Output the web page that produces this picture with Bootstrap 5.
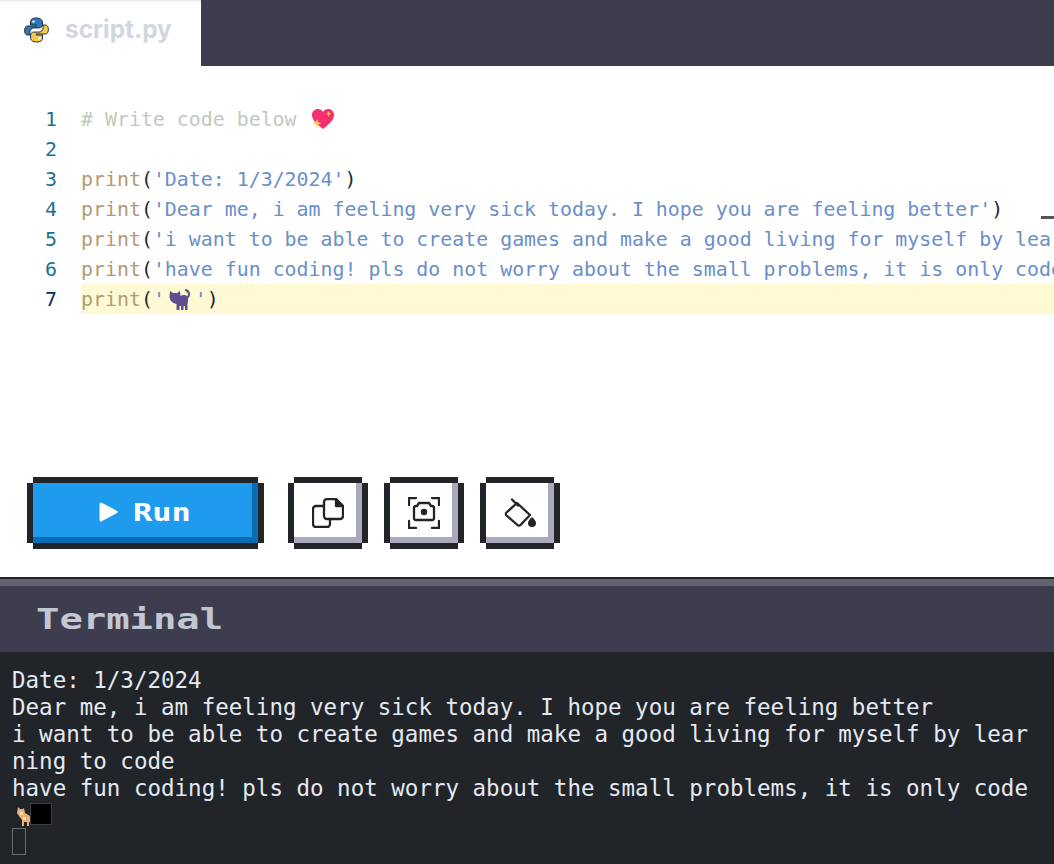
<!DOCTYPE html>
<html lang="en"><head><meta charset="utf-8"><title>script.py</title>
<link rel="stylesheet" href="https://cdn.jsdelivr.net/npm/bootstrap@5.3.0/dist/css/bootstrap.min.css">
<style>
html,body{height:864px;overflow:hidden;background:#fff}
.tabbar{height:66px;background:#3e3d50}
.filetab{width:201px;height:66px;background:#fff;padding:0 0 6px 24px;gap:16px;box-shadow:inset 0 3px 3px -2px #e4e4e6;color:#d2d6df;font:700 24.400px/1.2 Inter,"Liberation Sans",sans-serif}
.editor{height:511px;position:relative;overflow:hidden}
.code{padding-top:38px;font:19.9px/32px "DejaVu Sans Mono",monospace}
.cline{height:30px;white-space:pre}
.num{width:57px;text-align:right;color:#1a7290;flex:none;margin-right:24px}
.num-on{color:#0c2a66}
.txt{flex:1;min-width:0;color:#24292e}
.txt-on{background:#fffad3}
.fn{color:#b39a74}.str{color:#6a8fc9}.cmt{color:#c1c9bd}
.emo{display:inline-block;vertical-align:-4px}
.emo-heart{margin-left:2px}
.emo-cat{margin:0 4px 0 4px;vertical-align:-5px}
.tick{position:absolute;right:0;top:150px;width:13px;height:3px;background:#555}
.btnrow{position:absolute;left:33px;top:417px;gap:28px}
.pix{height:60px;width:68px;border:0;border-radius:0;padding:0;background:#fff;display:flex;align-items:center;justify-content:center;box-shadow:inset -6px -6px 0 #a8a9bb,0 -6px 0 #212529,0 6px 0 #212529,-6px 0 0 #212529,6px 0 0 #212529}
.pix-run{width:225px;margin-right:8px;background:#1f9bee;gap:14px;justify-content:flex-start;padding:0 0 2px 66px;color:#fff;box-shadow:inset -6px -6px 0 #0b6cb4,0 -6px 0 #212529,0 6px 0 #212529,-6px 0 0 #212529,6px 0 0 #212529;font:700 25px/1 "DejaVu Sans Mono",monospace}
.runlabel{display:inline-block;transform:scaleX(1.28);transform-origin:left center}
.termhead{height:75px;background:#3e3d50;border-top:2px solid #212529;padding:7px 0 0 36px;color:#c3c7d2;font:700 29px/66px "DejaVu Sans Mono",monospace;box-shadow:inset 0 7px 0 #63636f}
.termlabel{display:inline-block;transform:scaleX(1.34);transform-origin:left center}
.termbody{height:212px;background:#212529;color:#e4e9f3;padding:15px 16px 0 12px;font:22.5px/27px "DejaVu Sans Mono",monospace}
.tline{min-height:27px;white-space:pre-wrap;word-break:break-all}
.tcat{margin-left:5px;margin-right:-1px;vertical-align:-3px}
.blk{display:inline-block;width:22px;height:22px;background:#000;border:1px solid #3a3d42;vertical-align:-2px}
.cur{width:14px;height:27px;border:1px solid #6a6d72;margin-top:-1px}
</style></head><body>
<div class="tabbar d-flex"><div class="filetab d-flex align-items-center">
<svg width="25" height="26" viewBox="0 0 25 26"><path fill="#2f78b7" stroke="#1d2a38" stroke-width="1" d="M12.400 1C8 1 6.500 2.600 6.500 5v3h6.200v1H3.800C1.600 9 .6 11 .6 13.400c0 2.500 1 4.600 3 4.600h2.300v-3c0-2.300 1.900-4.100 4.100-4.100h5.400c1.700 0 3-1.400 3-3.100V5c0-2.300-2.400-4-6-4z"/><path fill="#f6cb4a" stroke="#1d2a38" stroke-width="1" d="M12.600 25c4.400 0 5.900-1.600 5.900-4v-3h-6.200v-1h8.900c2.200 0 3.200-2 3.200-4.400 0-2.500-1-4.600-3-4.600h-2.300v3c0 2.300-1.900 4.100-4.100 4.100H9.600c-1.700 0-3 1.400-3 3.100V21c0 2.300 2.400 4 6 4z"/><circle cx="9.500" cy="4.600" r="1.200" fill="#fff"/><circle cx="15.500" cy="21.400" r="1.200" fill="#fff"/></svg>
<span>script.py</span></div></div>
<div class="editor">
<div class="code">
<div class="cline d-flex"><div class="num">1</div><div class="txt"><span class="cmt"># Write code below </span><svg class="emo emo-heart" width="24" height="22" viewBox="0 0 24 22"><path fill="#f4306f" d="M12 21C4 15 1 11 1 7c0-3.500 2.700-6 5.800-6C9 1 11 2.200 12 4c1-1.800 3-3 5.200-3C20.300 1 23 3.500 23 7c0 4-3 8-11 14z"/><path fill="#fbd24c" d="M6 11l1.300 3 3 1.200-3 1.300L6 20l-1.300-3.500-3-1.300 3-1.200zM17.500 3l.8 2 2 .8-2 .8-.8 2-.8-2-2-.8 2-.8z"/></svg></div></div>
<div class="cline d-flex"><div class="num">2</div><div class="txt"></div></div>
<div class="cline d-flex"><div class="num">3</div><div class="txt"><span class="fn">print</span>(<span class="str">'Date: 1/3/2024'</span>)</div></div>
<div class="cline d-flex"><div class="num">4</div><div class="txt"><span class="fn">print</span>(<span class="str">'Dear me, i am feeling very sick today. I hope you are feeling better'</span>)</div></div>
<div class="cline d-flex"><div class="num">5</div><div class="txt overflow-hidden"><span class="fn">print</span>(<span class="str">'i want to be able to create games and make a good living for myself by learning to code'</span>)</div></div>
<div class="cline d-flex"><div class="num">6</div><div class="txt overflow-hidden"><span class="fn">print</span>(<span class="str">'have fun coding! pls do not worry about the small problems, it is only code'</span>)</div></div>
<div class="cline d-flex"><div class="num num-on">7</div><div class="txt txt-on"><span class="fn">print</span>(<span class="str">'<svg class="emo emo-cat" width="22" height="22" viewBox="0 0 22 22"><path fill="none" stroke="#5f4f8f" stroke-width="2" stroke-linecap="round" d="M16 9c3 0 4-2 4-4s-1-3-3-4"/><path fill="#5f4f8f" d="M1 2l3 2h4l3-2 .5 5c2-1.500 6-1.500 7 1 1 2 .5 5 0 7v6h-2.500v-4h-1.500v4h-2.500v-4h-1.500v4H7.500v-6C3 14 .5 11 .5 8z"/></svg>'</span>)</div></div>
</div>
<div class="tick"></div>
<div class="btnrow d-flex">
<button class="btn pix pix-run" type="button"><svg width="20" height="22" viewBox="0 0 20 22"><path fill="#fff" stroke="#fff" stroke-width="3" stroke-linejoin="round" d="M2 3l15 8-15 8z"/></svg><span class="runlabel">Run</span></button>
<button class="btn pix" type="button" aria-label="Copy"><svg width="32" height="30" viewBox="0 0 32 30" fill="none" stroke="#212529" stroke-width="2.300" stroke-linejoin="round" stroke-linecap="round"><path d="M15 1h9l7 7v10a3 3 0 0 1-3 3H15a3 3 0 0 1-3-3V4a3 3 0 0 1 3-3z"/><path fill="#212529" d="M24 1v7h7z"/><path d="M12 8H4a3 3 0 0 0-3 3v15a3 3 0 0 0 3 3h11a3 3 0 0 0 3-3v-5"/></svg></button>
<button class="btn pix" type="button" aria-label="Screenshot"><svg width="32" height="32" viewBox="0 0 32 32" fill="none" stroke="#212529" stroke-width="2.300" stroke-linecap="round" stroke-linejoin="round"><path d="M1 8V1h7M24 1h7v7M31 24v7h-7M8 31H1v-7"/><path d="M9 9l2-3h10l2 3h1a2 2 0 0 1 2 2v10a2 2 0 0 1-2 2H8a2 2 0 0 1-2-2V11a2 2 0 0 1 2-2z"/><circle cx="16" cy="15" r="3.200" fill="#212529" stroke="none"/></svg></button>
<button class="btn pix" type="button" aria-label="Fill"><svg width="32" height="30" viewBox="0 0 32 30" fill="none" stroke="#212529" stroke-width="2.300" stroke-linejoin="round" stroke-linecap="round"><path d="M8 1.500l6 6"/><path d="M13 5l13 12-9.500 10a2 2 0 0 1-3 0L2.500 17.500a2 2 0 0 1 0-3z"/><path fill="#212529" stroke="none" d="M28 19c2 2 4 4 4 6a4 4 0 0 1-8 0c0-2 2-4 4-6z"/></svg></button>
</div>
</div>
<div class="termhead"><span class="termlabel">Terminal</span></div>
<div class="termbody">
<div class="tline">Date: 1/3/2024</div>
<div class="tline">Dear me, i am feeling very sick today. I hope you are feeling better</div>
<div class="tline">i want to be able to create games and make a good living for myself by learning to code</div>
<div class="tline">have fun coding! pls do not worry about the small problems, it is only code</div>
<div class="tline"><svg class="tcat" width="14" height="20" viewBox="0 0 14 20"><path fill="#eeb070" d="M1 1l2 2h3l1-1 1 5 5 3v6h-1v4h-2v-4H7v4H5v-6L2 10 0 7z"/><path fill="#f9d9a8" d="M3 6h3v3H3zM6 11h3v3H6z"/></svg><span class="blk"></span></div>
<div class="cur"></div>
</div>
</body></html>
